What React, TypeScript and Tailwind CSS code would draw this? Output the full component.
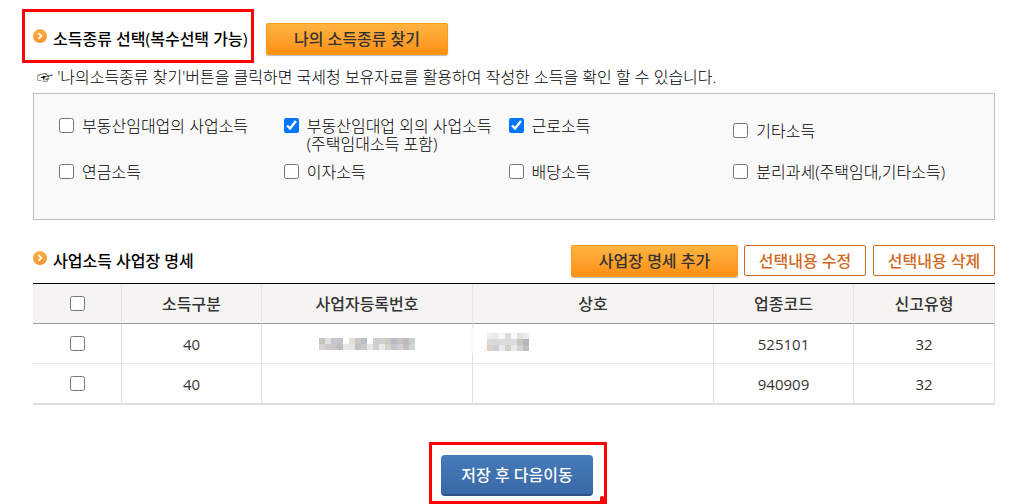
import React from 'react';

const incomeTypes = [
  { id: 'rental', name: '부동산임대업의 사업소득', checked: false },
  { id: 'business', name: '부동산임대업 외의 사업소득', note: '(주택임대소득 포함)', checked: true },
  { id: 'wage', name: '근로소득', checked: true },
  { id: 'other', name: '기타소득', checked: false, lowered: true },
  { id: 'pension', name: '연금소득', checked: false },
  { id: 'interest', name: '이자소득', checked: false },
  { id: 'dividend', name: '배당소득', checked: false },
  { id: 'separate', name: '분리과세(주택임대,기타소득)', checked: false },
];

const rows = [
  { id: 1, kind: '40', code: '525101', report: '32', masked: true },
  { id: 2, kind: '40', code: '940909', report: '32', masked: false },
];

const numberMosaic = [
  ['#c4c4bc', '#dfe1e0', '#c6c5cd', '#c6c2c5', '#ffffff', '#e2dfd8', '#cac8c4', '#b8bdc6', '#ffffff', '#cfcbc8', '#cdd0d0', '#c9cbbd', '#bbb8c8', '#c6c3c0', '#bebbc0', '#c9cdd1'],
  ['#d4d3d0', '#cdcbd0', '#cbc8cc', '#bfbdbe', '#e8e8e8', '#e6e6e7', '#c5c1c1', '#c9cace', '#e6e6e6', '#d1cecc', '#e5eaec', '#d3d4c6', '#c6c4ce', '#d1ced1', '#c1bec1', '#d2d5d6'],
];

const nameMosaic = [
  ['#ffffff', '#eeeeee', '#e9ecee', '#f8f8f8', '#dadbdb', '#f8f8f8', '#e2e3df', '#eae9eb'],
  ['#ffffff', '#d9d9d5', '#d3d9dc', '#dbdcda', '#dbdcda', '#dbdcda', '#c6c6bd', '#b9b4ba'],
  ['#fcf9f6', '#dcd2c9', '#c6d1db', '#e9e9e9', '#d0d0d0', '#e9e9e9', '#d4d4ce', '#c0bdc2'],
];

const Mosaic = ({ cells }: { cells: string[][] }) => (
  <svg width={cells[0].length * 6} height={cells.length * 6} shapeRendering="crispEdges" aria-hidden="true">
    {cells.map((line, y) =>
      line.map((color, x) => <rect key={`${x}-${y}`} x={x * 6} y={y * 6} width="6" height="6" fill={color} />)
    )}
  </svg>
);

const Bullet = () => (
  <svg className="mb-[6px] h-[14px] w-[14px] shrink-0" viewBox="0 0 14 14" aria-hidden="true">
    <defs>
      <linearGradient id="bullet" x1="0" y1="0" x2="0" y2="1">
        <stop offset="0" stopColor="#fdb04a" />
        <stop offset="1" stopColor="#f5922f" />
      </linearGradient>
    </defs>
    <circle cx="7" cy="7" r="7" fill="url(#bullet)" />
    <path d="M5.4 4.2 8.4 7l-3 2.8" fill="none" stroke="#fff" strokeWidth="1.8" />
  </svg>
);

const SectionTitle = ({ children }: { children: React.ReactNode }) => (
  <div className="flex items-center gap-[6px]">
    <Bullet />
    <h2 className="text-base leading-5 font-medium whitespace-nowrap text-black">{children}</h2>
  </div>
);

const orangeButton =
  'h-8 rounded-[2px] border border-[#fb9a17] bg-linear-to-b from-[#ffb440] to-[#ff9010] text-base leading-5 font-medium text-[#333] shadow-[0_1px_1px_#bbb]';
const outlineButton =
  'h-[31px] w-[122px] rounded-[2px] border border-[#d2691e] bg-white text-base leading-5 font-medium text-[#d2691e]';

const App = () => {
  return (
    <main className="relative overflow-hidden bg-white pt-[23px] pr-5 pl-[33px] font-['Open_Sans','Noto_Sans_CJK_KR',sans-serif] text-black">
      <section>
        <div className="flex h-8 items-center">
          <div className="relative w-[221px]">
            <SectionTitle>소득종류 선택(복수선택 가능)</SectionTitle>
            <div className="absolute -top-5 -bottom-[14px] -left-[11px] right-0 border-3 border-[#f00]" />
          </div>
          <button type="button" className={`${orangeButton} ml-3 w-[182px]`}>나의 소득종류 찾기</button>
        </div>
        <p className="mt-3 ml-1 text-base leading-5 font-light whitespace-nowrap">
          ☞ '나의소득종류 찾기'버튼을 클릭하면 국세청 보유자료를 활용하여 작성한 소득을 확인 할 수 있습니다.
        </p>
        <div className="mt-[6px] grid grid-cols-4 gap-y-[10px] border border-[#bfbfbf] bg-[#f9f9f9] pt-[23px] pr-9 pb-[38px] pl-[25px]">
          {incomeTypes.map((item) => (
            <div key={item.id} className={`flex items-start gap-2 ${item.lowered ? 'pt-[5px]' : ''}`}>
              <input id={item.id} type="checkbox" defaultChecked={item.checked} className="mt-px size-[15px] shrink-0" />
              <label htmlFor={item.id} className="text-base leading-[18px] font-light whitespace-nowrap">
                {item.name}
                {item.note && <span className="block">{item.note}</span>}
              </label>
            </div>
          ))}
        </div>
      </section>

      <section className="mt-[25px]">
        <div className="flex h-8 items-center justify-between">
          <SectionTitle>사업소득 사업장 명세</SectionTitle>
          <div className="flex items-start">
            <button type="button" className={`${orangeButton} w-[167px]`}>사업장 명세 추가</button>
            <button type="button" className={`${outlineButton} ml-[6px]`}>선택내용 수정</button>
            <button type="button" className={`${outlineButton} ml-[7px]`}>선택내용 삭제</button>
          </div>
        </div>
        <table className="mt-[6px] w-full table-fixed border-separate border-spacing-0 border-t border-b-2 border-t-black border-b-[#ddd] text-center text-[#333]">
          <colgroup>
            <col className="w-[89px]" />
            <col className="w-[140px]" />
            <col className="w-[211px]" />
            <col className="w-[241px]" />
            <col className="w-[140px]" />
            <col className="w-[141px]" />
          </colgroup>
          <thead className="bg-[#f5f4f2] text-base leading-5">
            <tr className="h-10 *:border-r *:border-b *:border-r-[#e5e5e5] *:border-b-[#999] *:p-0 *:font-medium">
              <th>
                <input type="checkbox" aria-label="전체 선택" className="block size-[15px] mx-auto" />
              </th>
              <th>소득구분</th>
              <th>사업자등록번호</th>
              <th>상호</th>
              <th>업종코드</th>
              <th>신고유형</th>
            </tr>
          </thead>
          <tbody className="text-[15px] leading-5">
            {rows.map((row) => (
              <tr key={row.id} className="h-10 *:border-r *:border-r-[#e0e0e0] *:border-b-[#e8e8e8] *:p-0 not-last:*:border-b last:h-[39px]">
                <td>
                  <input type="checkbox" aria-label={`${row.code} 선택`} className="block size-[15px] mx-auto" />
                </td>
                <td>{row.kind}</td>
                <td>
                  <div className="flex justify-center">{row.masked && <Mosaic cells={numberMosaic} />}</div>
                </td>
                <td className="relative">
                  {row.masked && (
                    <>
                      <span className="absolute top-1 -left-1 h-[25px] w-[6px] bg-[#fafafa]" />
                      <div className="ml-2 flex pb-1">
                        <Mosaic cells={nameMosaic} />
                      </div>
                    </>
                  )}
                </td>
                <td>{row.code}</td>
                <td>{row.report}</td>
              </tr>
            ))}
          </tbody>
        </table>
      </section>

      <div className="mt-[37px] flex justify-center pl-2">
        <div className="relative border-3 border-[#f00] pt-[10px] pr-[11px] pb-[5px] pl-[9px]">
          <button
            type="button"
            className="block h-[41px] w-[152px] rounded-[4px] border-b-2 border-[#2a548a] bg-linear-to-b from-[#467ab8] to-[#396aa8] text-base leading-5 font-medium text-white"
          >
            저장 후 다음이동
          </button>
          <span className="absolute right-0 bottom-0 h-[5px] w-1 rounded-t-xs bg-[#f00]" />
        </div>
      </div>
    </main>
  );
};

export default App;
